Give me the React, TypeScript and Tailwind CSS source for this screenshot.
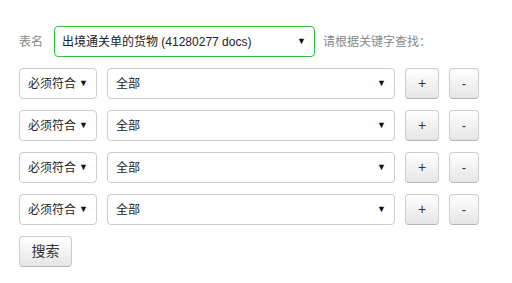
import React from 'react';

const font = { fontFamily: '"Liberation Sans", "Noto Sans CJK SC", sans-serif' };

function FakeSelect({ value, className }: { value: string; className: string }) {
  return (
    <div className={`flex items-center justify-between h-[31px] pl-[8px] pr-[8px] bg-white border border-[#ccc] rounded-[4px] text-[12px] text-[#222] ${className}`}>
      <span>{value}</span>
      <span className="text-[9px] text-[#111]">▼</span>
    </div>
  );
}

function Btn({ label, className }: { label: string; className: string }) {
  return (
    <button className={`h-[31px] flex items-center justify-center rounded-[4px] border border-[#ccc] border-b-[#b3b3b3] bg-gradient-to-b from-white to-[#e6e6e6] text-[#333] ${className}`}>
      {label}
    </button>
  );
}

export default function App() {
  const rows = [0, 1, 2, 3];
  return (
    <div className="w-[512px] h-[283px] bg-white pl-[19px] pt-[26px]" style={font}>
      {/* table picker */}
      <div className="flex items-center">
        <span className="text-[12px] text-[#888]">表名</span>
        <div className="ml-[11px] flex items-center justify-between w-[261px] h-[31px] pl-[7px] pr-[8px] border border-[#2ec23c] rounded-[4px] text-[12px] text-[#222]">
          <span>出境通关单的货物 (41280277 docs)</span>
          <span className="text-[9px] text-[#111]">▼</span>
        </div>
        <span className="ml-[8px] text-[12px] text-[#888]">请根据关键字查找：</span>
      </div>

      {/* conditions */}
      <div className="mt-[11px] flex flex-col gap-[11px]">
        {rows.map((r) => (
          <div key={r} className="flex items-center gap-[10px]">
            <FakeSelect value="必须符合" className="w-[78px]" />
            <FakeSelect value="全部" className="w-[288px]" />
            <Btn label="+" className="w-[34px] text-[14px]" />
            <Btn label="-" className="w-[30px] text-[13px]" />
          </div>
        ))}
      </div>

      <Btn label="搜索" className="mt-[11px] w-[53px] text-[14px]" />
    </div>
  );
}
